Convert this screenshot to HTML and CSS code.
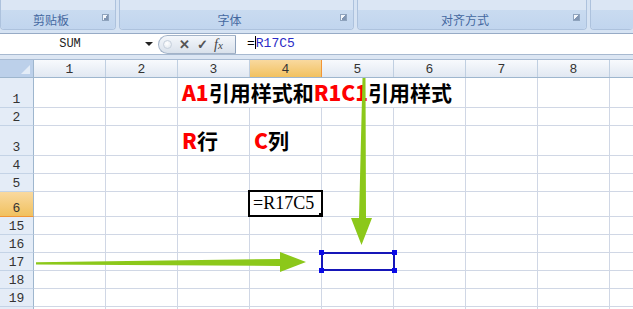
FILE: index.html
```html
<!DOCTYPE html>
<html lang="zh">
<head>
  <meta charset="UTF-8" />
  <title>R1C1引用样式</title>
  <link rel="stylesheet" href="styles.css">
</head>
<body>

  <div class="ribbon">
    <div class="group g1">
      <div class="group-body"></div>
      <div class="group-label">剪贴板<span class="launcher"></span></div>
    </div>
    <div class="group g2">
      <div class="group-body"></div>
      <div class="group-label">字体<span class="launcher"></span></div>
    </div>
    <div class="group g3">
      <div class="group-body"></div>
      <div class="group-label">对齐方式<span class="launcher"></span></div>
    </div>
    <div class="group g4">
      <div class="group-body"></div>
      <div class="group-label"></div>
    </div>
  </div>

  <div class="formula-bar">
    <div class="name-box">SUM</div>
    <div class="name-drop"></div>
    <div class="fx-pill">
      <span class="dot"></span>
      <span class="btn">✕</span>
      <span class="btn">✓</span>
      <span class="fx"><i>f</i><i class="sub">x</i></span>
    </div>
    <div class="formula"><span class="eq">=</span><span class="caret"></span><span class="ref">R17C5</span></div>
  </div>
  <div class="bar-gap"></div>

  <div class="sheet">
    <div class="row head">
      <div class="corner"></div>
      <div class="cells">
        <div class="ch">1</div><div class="ch">2</div><div class="ch">3</div>
        <div class="ch sel">4</div><div class="ch">5</div><div class="ch">6</div>
        <div class="ch">7</div><div class="ch">8</div><div class="ch"></div>
      </div>
    </div>

    <div class="row tall">
      <div class="rh">1</div>
      <div class="cells">
        <div class="cell title span-4"><b class="red">A1</b>引用样式和<b class="red">R1C1</b>引用样式</div>
      </div>
    </div>
    <div class="row"><div class="rh">2</div><div class="cells"></div></div>
    <div class="row tall">
      <div class="rh">3</div>
      <div class="cells">
        <div class="cell title col-3"><b class="red">R</b>行</div>
        <div class="cell title col-4"><b class="red">C</b>列</div>
      </div>
    </div>
    <div class="row"><div class="rh">4</div><div class="cells"></div></div>
    <div class="row"><div class="rh">5</div><div class="cells"></div></div>
    <div class="row mid">
      <div class="rh sel">6</div>
      <div class="cells">
        <div class="edit-cell col-4">=R17C5<span class="fill-handle"></span></div>
      </div>
    </div>
    <div class="row"><div class="rh">15</div><div class="cells"></div></div>
    <div class="row"><div class="rh">16</div><div class="cells"></div></div>
    <div class="row">
      <div class="rh">17</div>
      <div class="cells">
        <div class="picked col-5">
          <span class="h tl"></span><span class="h tr"></span><span class="h bl"></span><span class="h br"></span>
        </div>
      </div>
    </div>
    <div class="row"><div class="rh">18</div><div class="cells"></div></div>
    <div class="row"><div class="rh">19</div><div class="cells"></div></div>
    <div class="row"><div class="rh"></div><div class="cells"></div></div>
  </div>

  <svg class="arrows" width="633" height="309" viewBox="0 0 633 309">
    <polygon points="36,262.3 280,259 280,252 306,262 280,272 280,266 36,264.5" />
    <polygon points="362.5,78 365.5,78 366,218 372,218 361.5,245 351,218 359,218" />
  </svg>

</body>
</html>
```

FILE: styles.css
```css
* {
  box-sizing: border-box;
}

body {
  margin: 0;
  width: 633px;
  height: 309px;
  overflow: hidden;
  position: relative;
  background: #fff;
  font-family: "Liberation Sans", sans-serif;
}

/* ribbon */

.ribbon {
  display: flex;
  gap: 3px;
  height: 34px;
  padding-bottom: 3px;
  background: #d6e3f3;
  border-bottom: 1px solid #97abc6;
}

.group {
  display: flex;
  flex-direction: column;
  border: 1px solid #adc2dd;
  border-top: none;
  border-radius: 0 0 4px 4px;
  background: #dbe6f4;
  overflow: hidden;
}

.g1 { width: 116px; }
.g2 { width: 235px; }
.g3 { width: 230px; }
.g4 { flex: 1; border-right: none; }

.group-body {
  height: 10px;
}

.group-label {
  flex: 1;
  position: relative;
  display: flex;
  align-items: center;
  justify-content: center;
  padding-right: 14px;
  background: linear-gradient(#c9dbf0, #c1d5ee);
  color: #4468a0;
  font-size: 12px;
  font-family: "Noto Sans CJK SC", sans-serif;
}

.launcher {
  position: absolute;
  right: 6px;
  top: 4px;
  width: 7px;
  height: 7px;
  border: 1px solid #8ea3bd;
  background: linear-gradient(135deg, #f2f6fb 50%, #8196b3 50%);
}

/* formula bar */

.formula-bar {
  display: flex;
  height: 21px;
  border-bottom: 1px solid #a7b9d0;
  background: #fff;
}

.name-box {
  width: 140px;
  text-align: center;
  font-family: "Liberation Mono", monospace;
  font-size: 12px;
  line-height: 20px;
  color: #222;
}

.name-drop {
  width: 18px;
  display: flex;
  align-items: center;
  justify-content: center;
}

.name-drop::before {
  content: "";
  border-left: 4px solid transparent;
  border-right: 4px solid transparent;
  border-top: 4px solid #222;
}

.fx-pill {
  width: 78px;
  display: flex;
  align-items: center;
  gap: 6px;
  padding-left: 4px;
  margin-top: 1px;
  height: 19px;
  border: 1px solid #a3b3c8;
  border-right-color: #8da1bb;
  border-radius: 10px 0 0 10px;
  background: linear-gradient(#f4f7fb, #d9e1eb);
  color: #555;
}

.dot {
  width: 9px;
  height: 9px;
  border-radius: 50%;
  border: 1px solid #c6d0dc;
  background: radial-gradient(circle at 40% 35%, #fff, #dde4ec);
}

.btn {
  font-size: 13px;
  line-height: 1;
  font-weight: bold;
  width: 12px;
  text-align: center;
}

.fx {
  font-family: "Liberation Serif", serif;
  font-size: 14px;
  color: #444;
}

.fx .sub {
  font-size: 11px;
}

.formula {
  flex: 1;
  padding-left: 11px;
  font-family: "Liberation Mono", monospace;
  font-size: 13px;
  line-height: 20px;
}

.eq {
  color: #000;
}

.caret {
  display: inline-block;
  width: 1px;
  height: 13px;
  background: #000;
  vertical-align: -2px;
}

.ref {
  color: #2b2bc6;
}

.bar-gap {
  height: 5px;
  background: #dce6f3;
  border-bottom: 1px solid #a8bbd3;
}

/* sheet */

.row {
  display: grid;
  grid-template-columns: 34px 1fr;
  height: 18px;
}

.row.tall { height: 30px; }
.row.mid { height: 25px; }
.row.head { height: 18px; }

.corner {
  border-right: 1px solid #9eb6ce;
  border-bottom: 1px solid #9eb6ce;
  background: #bcd0ea;
  position: relative;
}

.corner::after {
  content: "";
  position: absolute;
  right: 3px;
  bottom: 3px;
  border-left: 9px solid transparent;
  border-bottom: 9px solid #e3ecf7;
}

.rh {
  display: flex;
  align-items: flex-end;
  justify-content: center;
  border-right: 1px solid #9eb6ce;
  border-bottom: 1px solid #c4d3e6;
  background: #e4ecf7;
  font-family: "Liberation Mono", monospace;
  font-size: 13px;
  line-height: 14px;
  color: #333;
}

.rh.sel {
  background: linear-gradient(#f9d99f, #f1c15f);
  border-bottom-color: #f29536;
}

.cells {
  display: grid;
  grid-template-columns: repeat(9, 72px);
  border-bottom: 1px solid #d0d7e5;
  background: repeating-linear-gradient(90deg, #fff 0 71px, #d0d7e5 71px 72px);
}

.head .cells {
  border-bottom-color: #9eb6ce;
  background: none;
}

.ch {
  display: flex;
  align-items: flex-end;
  justify-content: center;
  border-right: 1px solid #c0cfe1;
  background: linear-gradient(#f8fafd, #e1e8f2);
  font-family: "Liberation Mono", monospace;
  font-size: 13px;
  line-height: 14px;
  color: #333;
}

.ch.sel {
  background: linear-gradient(#f9d99f, #f1c15f);
  border-right-color: #f29536;
}

.col-3 { grid-column: 3; }
.col-4 { grid-column: 4; }
.col-5 { grid-column: 5; }
.span-4 { grid-column: 3 / 7; margin-right: 1px; }

.cell {
  display: flex;
  align-items: flex-end;
  white-space: nowrap;
}

.title {
  padding: 0 0 3px 4px;
  background: #fff;
  font-family: "Noto Sans CJK SC", sans-serif;
  font-weight: bold;
  font-size: 21px;
  line-height: 24px;
  color: #000;
}

.title.col-3,
.title.col-4 {
  margin-right: 1px;
}

.red {
  color: #ff0000;
}

.edit-cell {
  position: relative;
  z-index: 1;
  margin: -2px -1px -1px -2px;
  padding: 0 0 0 3px;
  border: 2px solid #000;
  background: #fff;
  font-family: "Liberation Serif", serif;
  font-size: 18px;
  line-height: 23px;
  white-space: nowrap;
  overflow: hidden;
}

.fill-handle {
  position: absolute;
  right: -2px;
  bottom: -2px;
  width: 4px;
  height: 4px;
  background: #000;
}

.picked {
  position: relative;
  z-index: 1;
  margin: -1px -1px -1px -1px;
  border: 2px solid #1616b8;
}

.h {
  position: absolute;
  width: 5px;
  height: 5px;
  background: #0a0ae6;
}

.tl { left: -4px; top: -4px; }
.tr { right: -4px; top: -4px; }
.bl { left: -4px; bottom: -4px; }
.br { right: -4px; bottom: -4px; }

/* annotation arrows */

.arrows {
  position: absolute;
  left: 0;
  top: 0;
  pointer-events: none;
  z-index: 2;
}

.arrows polygon {
  fill: #8cc81a;
}
```
